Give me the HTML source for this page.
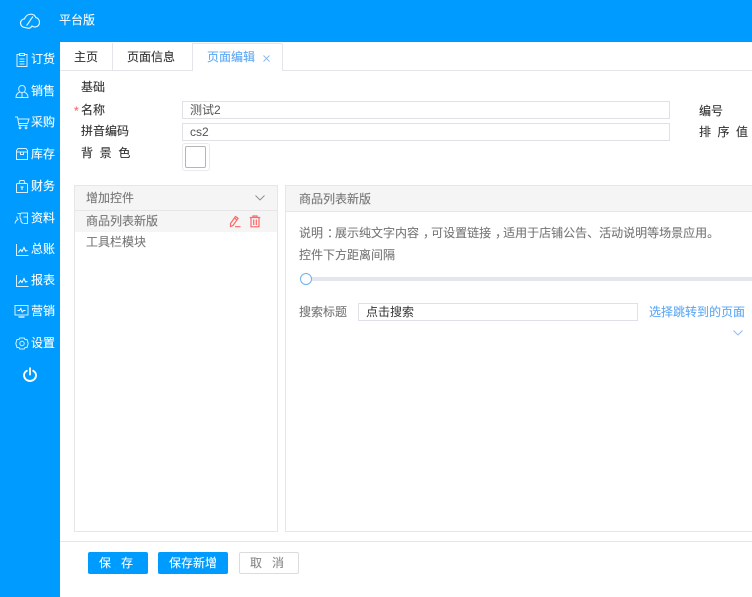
<!DOCTYPE html>
<html lang="zh">
<head>
<meta charset="utf-8">
<title>页面编辑</title>
<style>
html,body{margin:0;padding:0;width:752px;height:597px;overflow:hidden;background:#fff;}
body{font-family:"Liberation Sans","Noto Sans CJK SC",sans-serif;font-size:12px;color:#333;position:relative;}
.a{position:absolute;white-space:nowrap;line-height:16px;-webkit-text-stroke:.12px currentColor;}
.box{position:absolute;box-sizing:border-box;}
.w{color:#fff;-webkit-text-stroke:.1px #fff;}
.g{color:#777;}
.k{color:#333;}
.p{position:relative;left:4px;top:-3px;}
svg{position:absolute;overflow:visible;fill:none;}
.inp{position:absolute;box-sizing:border-box;border:1px solid #dfe0e8;background:#fff;height:18px;line-height:16px;padding-left:7px;white-space:nowrap;overflow:hidden;}
</style>
</head>
<body>
<div class="box" style="left:0;top:0;width:752px;height:42px;background:#009bff"></div>
<div class="box" style="left:0;top:42px;width:60px;height:555px;background:#009bff"></div>

<svg style="left:19px;top:12px" width="22" height="20" viewBox="0 0 22 20" stroke="#fff" stroke-width="1.200" opacity=".9"><path d="M6 15.500C3.500 15.500 1.500 13.500 1.500 11C1.500 8.800 3.200 7 5.500 6.800C6.500 4 9 2.200 12 2.200C14.500 2.200 16 3.500 16.800 5.500C19 6 20.500 8 20.500 10.500C20.500 13 18.500 15 16 15C14.500 15 13.500 14.500 13 14C12 15.500 10.500 16.500 9 16.200C7.800 16 7 15.500 6 15.500Z"/><path d="M7.500 13.500C10 11 11 8 14 4.500"/></svg>
<div class="a w" style="left:59px;top:12px">平台版</div>

<!-- sidebar -->
<svg style="left:15px;top:52px" width="14" height="16" viewBox="0 0 14 16" stroke="#d8efff" stroke-width="1"><path d="M4 2.500H2V14.500H12V2.500H10M4.500 1.500H9.500V3.500H4.500ZM4.500 7H9.500M4.500 9.500H9.500M4.500 12H9.500"/></svg>
<div class="a w" style="left:31px;top:51px">订货</div>
<svg style="left:15px;top:84px" width="14" height="15" viewBox="0 0 14 15" stroke="#d8efff" stroke-width="1"><path d="M7 1.500C9 1.500 10.300 3 10.300 5C10.300 7 9 8.500 7 8.500C5 8.500 3.700 7 3.700 5C3.700 3 5 1.500 7 1.500ZM4.700 8C2.500 9 1 11 1 13.500H13C13 11 11.500 9 9.300 8M7 9V13.500"/></svg>
<div class="a w" style="left:31px;top:83px">销售</div>
<svg style="left:14px;top:115px" width="16" height="15" viewBox="0 0 16 15" stroke="#d8efff" stroke-width="1"><path d="M1 2H3.500L5 10.500H13.500M4 4H15L13.500 8.500H4.800"/><circle cx="6" cy="12.800" r=".9"/><circle cx="12" cy="12.800" r=".9"/></svg>
<div class="a w" style="left:31px;top:114px">采购</div>
<svg style="left:15px;top:147px" width="14" height="14" viewBox="0 0 14 14" stroke="#d8efff" stroke-width="1"><path d="M1.500 3.500L3 1.500H11L12.500 3.500V12.500H1.500ZM1.500 5H12.500M5.500 5V7.500H8.500V5"/></svg>
<div class="a w" style="left:31px;top:146px">库存</div>
<svg style="left:15px;top:179px" width="14" height="15" viewBox="0 0 14 15" stroke="#d8efff" stroke-width="1"><path d="M4 4.500L5 1.500H9L10 4.500M2.500 4.500H11.500C12.200 4.500 12.500 5 12.500 5.500V13.500H1.500V5.500C1.500 5 1.800 4.500 2.500 4.500Z"/><path d="M5.500 8H8.500M7 8V11" stroke="#fff"/></svg>
<div class="a w" style="left:31px;top:178px">财务</div>
<svg style="left:14px;top:211px" width="15" height="14" viewBox="0 0 15 14" stroke="#d8efff" stroke-width="1"><path d="M1 12.500C1.500 10 2.500 9 4 8.500C3 7.500 2.700 6.500 3 5.500M7 2H13.500V12.500H9.500M7 2C5.500 4 5.500 7 7 8.500C6.500 10 7.500 11.500 9 12.500M3.500 2.500H7M9.500 6H13"/></svg>
<div class="a w" style="left:31px;top:210px">资料</div>
<svg style="left:15px;top:243px" width="14" height="14" viewBox="0 0 14 14" stroke="#d8efff" stroke-width="1"><path d="M1.500 1V12.500H13.500"/><path d="M3.500 9.500L5.500 6.500L7 8.500L9 4.500L10.500 8L12.500 7.500" stroke="#fff"/></svg>
<div class="a w" style="left:31px;top:241px">总账</div>
<svg style="left:15px;top:274px" width="14" height="14" viewBox="0 0 14 14" stroke="#d8efff" stroke-width="1"><path d="M1.500 1V12.500H13.500"/><path d="M3.500 9.500L5.500 6.500L7 8.500L9 4.500L10.500 8L12.500 7.500" stroke="#fff"/></svg>
<div class="a w" style="left:31px;top:272px">报表</div>
<svg style="left:14px;top:304px" width="15" height="15" viewBox="0 0 15 15" stroke="#d8efff" stroke-width="1"><path d="M1 1.500H14V11H1Z"/><path d="M3.500 6.500H5.500L6.800 4.500L8.200 8L9.500 6.500H11.500" stroke="#fff"/><path d="M4.500 13H10.500" stroke-width="1.500"/></svg>
<div class="a w" style="left:31px;top:303px">营销</div>
<svg style="left:15px;top:336px" width="14" height="15" viewBox="0 0 14 15" stroke="#d8efff" stroke-width="1"><path d="M4.800 2L9.200 2L10 3.500L12 3.500L13.200 7.500L12 11.500L10 11.500L9.200 13L4.800 13L4 11.500L2 11.500L.8 7.500L2 3.500L4 3.500Z"/><circle cx="7" cy="7.500" r="2.200"/></svg>
<div class="a w" style="left:31px;top:335px">设置</div>
<svg style="left:23px;top:367px" width="14" height="15" viewBox="0 0 14 15" stroke="#fff" stroke-width="1.900" stroke-linecap="round"><path d="M7 1.200V7.500M3.800 3.800C2 4.800 1 6.500 1 8.300C1 11.500 3.700 14 7 14C10.300 14 13 11.500 13 8.300C13 6.500 12 4.800 10.200 3.800"/></svg>

<!-- tabs -->
<div class="box" style="left:60px;top:70px;width:692px;height:1px;background:#e4e5ea"></div>
<div class="box" style="left:60px;top:43px;width:53px;height:27px;border-right:1px solid #e4e5ea"></div>
<div class="box" style="left:112px;top:43px;width:81px;height:27px;border-right:1px solid #e4e5ea"></div>
<div class="box" style="left:192px;top:43px;width:91px;height:28px;background:#fff;border:1px solid #e4e5ea;border-bottom:0;border-radius:2px 2px 0 0"></div>
<div class="a k" style="left:74px;top:49px">主页</div>
<div class="a k" style="left:127px;top:49px">页面信息</div>
<div class="a" style="left:207px;top:49px;color:#5fa9f5">页面编辑</div>
<svg style="left:263px;top:55px" width="7" height="7" viewBox="0 0 7 7" stroke="#88b8ee" stroke-width=".9"><path d="M.5 .5L6.500 6.500M6.500 .5L.5 6.500"/></svg>

<!-- form -->
<div class="a k" style="left:81px;top:79px">基础</div>
<div class="a" style="left:74px;top:103px;color:#f56c6c;font-size:12px">*</div>
<div class="a k" style="left:81px;top:102px">名称</div>
<div class="a k" style="left:81px;top:123px">拼音编码</div>
<div class="a k" style="left:81px;top:145px">背&nbsp;&nbsp;景&nbsp;&nbsp;色</div>
<div class="inp" style="left:182px;top:101px;width:488px;color:#555">测试2</div>
<div class="inp" style="left:182px;top:123px;width:488px;color:#555">cs2</div>
<div class="box" style="left:182px;top:143px;width:28px;height:28px;background:#fff;border:1px solid #e9e9ee;border-radius:3px"></div>
<div class="box" style="left:185px;top:146px;width:21px;height:22px;background:#fff;border:1px solid #b5b5b5;border-radius:2px"></div>
<div class="a k" style="left:699px;top:103px">编号</div>
<div class="a k" style="left:699px;top:124px;letter-spacing:6.500px">排序值</div>

<!-- left panel -->
<div class="box" style="left:74px;top:185px;width:204px;height:347px;border:1px solid #e6e6e6;background:#fff"></div>
<div class="box" style="left:75px;top:186px;width:202px;height:25px;background:#f5f5f5;border-bottom:1px solid #e6e6e6"></div>
<div class="box" style="left:75px;top:211px;width:202px;height:21px;background:#f5f5f5"></div>
<div class="a g" style="left:86px;top:190px">增加控件</div>
<svg style="left:255px;top:195px" width="10" height="6" viewBox="0 0 10 6" stroke="#8a8a8a" stroke-width=".9"><path d="M.5 .5L5 5L9.500 .5"/></svg>
<div class="a g" style="left:86px;top:213px">商品列表新版</div>
<div class="a g" style="left:86px;top:234px">工具栏模块</div>
<svg style="left:229px;top:215px" width="13" height="13" viewBox="0 0 13 13" stroke="#f66" stroke-width="1.200"><path d="M1.500 8.500L6.500 1.500L9 3.300L4 10.500L1.500 11.500ZM5.500 3L8 5M6 11.700H11.500"/></svg>
<svg style="left:249px;top:215px" width="12" height="13" viewBox="0 0 12 13" stroke="#f66" stroke-width="1.200"><path d="M.8 2.500H11.200M4 2.500V1H8V2.500M2 2.500V11.800H10V2.500M4.700 4.500V10M7.300 4.500V10"/></svg>

<!-- right panel -->
<div class="box" style="left:285px;top:185px;width:480px;height:347px;border:1px solid #e6e6e6;background:#fff"></div>
<div class="box" style="left:286px;top:186px;width:466px;height:26px;background:#f5f5f5;border-bottom:1px solid #e6e6e6"></div>
<div class="a g" style="left:299px;top:191px">商品列表新版</div>
<div class="a g" style="left:299px;top:225px">说明<span class="p" style="top:0">：</span>展示纯文字内容<span class="p" style="top:0">，</span>可设置链接<span class="p" style="top:0">，</span>适用于店铺公告、活动说明等场景应用。</div>
<div class="a g" style="left:299px;top:247px">控件下方距离间隔</div>
<div class="box" style="left:306px;top:277px;width:446px;height:4px;background:#e4e6ef"></div>
<div class="box" style="left:300px;top:273px;width:12px;height:12px;border:1.500px solid #6cb0f5;border-radius:50%;background:#fff"></div>
<div class="a g" style="left:299px;top:304px">搜索标题</div>
<div class="inp" style="left:358px;top:303px;width:280px;color:#333">点击搜索</div>
<div class="a" style="left:649px;top:304px;color:#5fa9f5">选择跳转到的页面</div>
<svg style="left:733px;top:330px" width="10" height="6" viewBox="0 0 10 6" stroke="#88b8ee" stroke-width=".9"><path d="M.5 .5L5 5L9.500 .5"/></svg>

<!-- footer -->
<div class="box" style="left:60px;top:541px;width:692px;height:1px;background:#e6e6e6"></div>
<div class="box" style="left:88px;top:552px;width:60px;height:22px;background:#009bff;border-radius:2px"></div>
<div class="a w" style="left:99px;top:555px">保&nbsp;&nbsp;&nbsp;存</div>
<div class="box" style="left:158px;top:552px;width:70px;height:22px;background:#009bff;border-radius:2px"></div>
<div class="a w" style="left:169px;top:555px">保存新增</div>
<div class="box" style="left:239px;top:552px;width:60px;height:22px;background:#fff;border:1px solid #dcdcdc;border-radius:2px"></div>
<div class="a" style="left:250px;top:555px;color:#888">取&nbsp;&nbsp;&nbsp;消</div>
</body>
</html>
